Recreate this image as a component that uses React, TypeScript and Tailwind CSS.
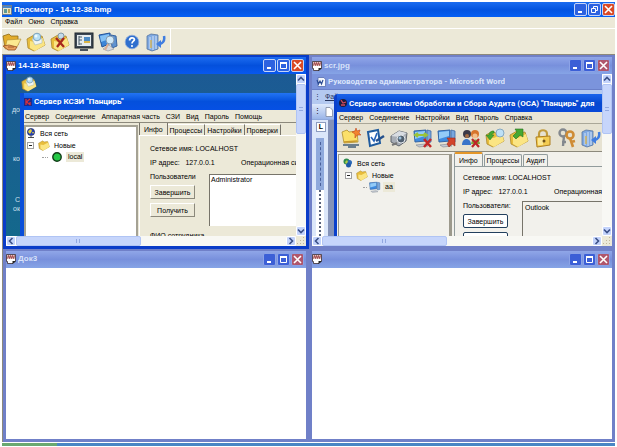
import React from 'react';
import clsx from 'clsx';

type IconProps = { className?: string };

/* Icons */

function AppIcon({ className }: IconProps) {
  return (
    <svg viewBox="0 0 10 10" className={className}>
      <rect x="0.5" y="0.5" width="9" height="9" fill="#e9e4c8" stroke="#6f7c8c" />
      <rect x="1" y="1" width="8" height="2" fill="#4c86c8" />
      <rect x="2" y="4" width="3" height="4" fill="#5e9a94" />
      <rect x="6" y="4" width="2" height="4" fill="#b8a25c" />
    </svg>
  );
}

function DocIcon({ className }: IconProps) {
  return (
    <svg viewBox="0 0 10 10" className={className}>
      <path d="M0.5 0.5h9v6.500l-2.500 2.500h-5.500v-2h-1z" fill="#fff" stroke="#3b2b30" strokeWidth="0.8" />
      <path d="M1 1h8v4h-8z" fill="#e4c4c0" />
      <path d="M1.500 4.500l1-3 1 3 1-3 1 3 1-3 1 3 1-3" stroke="#8c2228" strokeWidth="0.7" fill="none" />
      <path d="M6.500 10v-3h3.500z" fill="#222" />
    </svg>
  );
}

function Folder({ className, children }: IconProps & { children?: React.ReactNode }) {
  return (
    <svg viewBox="0 0 20 20" className={className}>
      <path d="M1 7l7-4 2 2 6-1 3 9-11 6-6-3z" fill="#e8bd3c" stroke="#a8862c" strokeWidth="0.8" />
      <path d="M4 9l5 1 8-4 2 7-10 6-5-3z" fill="#fbe583" />
      {children}
    </svg>
  );
}

function FolderSearch({ className }: IconProps) {
  return (
    <Folder className={className}>
      <path d="M6 7l5-3 5 3v4l-7 2z" fill="#f1f5f2" stroke="#a9b8b4" strokeWidth="0.6" />
      <circle cx="11" cy="5" r="3.8" fill="#b9e0f5" stroke="#7ba2bd" />
      <circle cx="10" cy="4" r="1.5" fill="#eefaff" />
    </Folder>
  );
}

function FolderDelete({ className }: IconProps) {
  return (
    <Folder className={className}>
      <circle cx="11" cy="4" r="3" fill="#c5dceb" stroke="#8299a8" />
      <path d="M6 6l8 9M14 6l-7 9" stroke="#a8281c" strokeWidth="2.3" fill="none" />
    </Folder>
  );
}

function FolderOpenHand({ className }: IconProps) {
  return (
    <svg viewBox="0 0 20 20" className={className}>
      <path d="M1 4l6-2 2 2h7v9l-13 3z" fill="#e3ad2c" stroke="#8d6a18" strokeWidth="0.8" />
      <path d="M5 8l14-1-4 8-12 2z" fill="#fcea90" stroke="#b08b2e" strokeWidth="0.6" />
      <path d="M1 14l6-1 8 2-2 3h-7z" fill="#e9a15e" stroke="#944f22" strokeWidth="0.8" />
      <path d="M6 15h6" stroke="#944f22" strokeWidth="0.8" />
    </svg>
  );
}

function ScreenIcon({ className }: IconProps) {
  return (
    <svg viewBox="0 0 20 20" className={className}>
      <rect x="1" y="1" width="18" height="15" fill="#3d4854" stroke="#1f262e" />
      <rect x="3" y="3" width="14" height="11" fill="#e6ecef" />
      <path d="M5 4v9M5 5h3M5 8h3M5 12h3" stroke="#4b5d6b" />
      <rect x="10" y="5" width="6" height="6" fill="#4d8ac4" />
      <rect x="10" y="9" width="6" height="2" fill="#d9b54a" />
      <path d="M6 18h8" stroke="#4b545c" strokeWidth="2" />
    </svg>
  );
}

function ComputerSearch({ className }: IconProps) {
  return (
    <svg viewBox="0 0 20 20" className={className}>
      <path d="M1 3l11-2 1 10-9 4z" fill="#3d86d8" stroke="#24539a" />
      <path d="M2 4l9-2v5l-8 3z" fill="#84c1f4" />
      <path d="M13 3l5 1 1 10-5 2z" fill="#5f93d0" stroke="#3a65a0" />
      <path d="M5 17l6-4 5 4-6 2z" fill="#d7dadf" stroke="#8a919c" strokeWidth="0.6" />
      <circle cx="12" cy="8" r="4" fill="#cfe9f9" stroke="#8499ae" />
      <path d="M10 12l-3 6" stroke="#dcae94" strokeWidth="2" />
    </svg>
  );
}

function HelpIcon({ className }: IconProps) {
  return (
    <svg viewBox="0 0 20 20" className={className}>
      <circle cx="10" cy="10" r="8.5" fill="#2f6fce" stroke="#8aa9dc" />
      <path d="M7 8c0-4 6-4 6-1 0 2-3 2-3 5" stroke="#fff" strokeWidth="2.2" fill="none" />
      <circle cx="10" cy="15" r="1.3" fill="#fff" />
    </svg>
  );
}

function ExitIcon({ className }: IconProps) {
  return (
    <svg viewBox="0 0 20 20" className={className}>
      <path d="M1 4l4-2 7 1v14l-6 2-5-2z" fill="#7fa9e2" stroke="#55759f" strokeWidth="0.8" />
      <path d="M4 5v12M7 4v14M10 4v13" stroke="#d5e3f5" />
      <path d="M5 8v8" stroke="#d0b25a" strokeWidth="1.5" />
      <path d="M18 4c1 5-1 7-4 8" stroke="#3f7de0" strokeWidth="2.5" fill="none" />
      <path d="M10 12l5-4v8z" fill="#3f7de0" />
    </svg>
  );
}

function FolderNew({ className }: IconProps) {
  return (
    <svg viewBox="0 0 20 20" className={className}>
      <path d="M1 4l5-2 2 2 8-1 1 11-14 1z" fill="#fbe069" stroke="#b08f2c" strokeWidth="0.8" />
      <path d="M3 14l13-1" stroke="#c99a2c" strokeWidth="1.5" />
      <path d="M2 17h16M7 19h8" stroke="#6b7f8e" strokeWidth="1.8" />
      <path d="M15 0l1 3 3-1-1 3 2 2h-4l-2 3v-4l-3-2 3-1z" fill="#f3842e" stroke="#c2481e" strokeWidth="0.6" />
    </svg>
  );
}

function CheckNote({ className }: IconProps) {
  return (
    <svg viewBox="0 0 20 20" className={className}>
      <path d="M3 4l10-2 2 13-10 3z" fill="#fff" stroke="#1f5b9e" strokeWidth="2" />
      <path d="M6 9l3 4 3-8" stroke="#2563b8" strokeWidth="1.6" fill="none" />
      <path d="M19 8l-8 5" stroke="#24508c" strokeWidth="2.5" />
    </svg>
  );
}

function CameraIcon({ className }: IconProps) {
  return (
    <svg viewBox="0 0 20 20" className={className}>
      <path d="M2 8l8-5 8 2-1 8-7 5-8-4z" fill="#a7adb5" stroke="#5f656d" />
      <path d="M2 8l8-5 8 2-7 4z" fill="#d9dde2" />
      <circle cx="12" cy="11" r="4" fill="#51606f" stroke="#e1e5e9" />
      <circle cx="11" cy="10" r="1.5" fill="#9ec1dd" />
      <path d="M3 17l5-2" stroke="#777" strokeWidth="2" />
    </svg>
  );
}

function ComputerIcon({ className, mark }: IconProps & { mark: 'cross' | 'arrow' | 'none' }) {
  return (
    <svg viewBox="0 0 20 20" className={className}>
      <path d="M1 3l12-1v11l-11 1z" fill="#3f8be0" stroke="#3465a4" />
      <path d="M2 4l10-1v5l-10 3z" fill="#93cbf7" />
      <path d="M14 2l4 1v11l-4 1z" fill="#78a7dd" stroke="#3e6ba7" strokeWidth="0.8" />
      <path d="M3 17l9-1 3 2-9 1z" fill="#c7ccd4" stroke="#7f8790" strokeWidth="0.6" />
      {mark === 'cross' && (
        <>
          <path d="M3 7h10M5 5l-3 2 3 2M11 5l3 2-3 2" stroke="#9ac33a" strokeWidth="2" fill="none" />
          <path d="M11 11l7 8M18 11l-7 8" stroke="#c22828" strokeWidth="2.5" />
        </>
      )}
      {mark === 'arrow' && <path d="M10 10h8v8l-3-2-3 3-2-3 2-3z" fill="#d2442a" stroke="#9c2a18" strokeWidth="0.6" />}
    </svg>
  );
}

function UsersDelete({ className }: IconProps) {
  return (
    <svg viewBox="0 0 20 20" className={className}>
      <circle cx="6" cy="6" r="4" fill="#3b3946" />
      <circle cx="14" cy="6" r="4" fill="#d7752c" />
      <circle cx="14" cy="8" r="2.5" fill="#f3c08c" />
      <circle cx="6" cy="8" r="2" fill="#a56d43" />
      <path d="M1 17c0-8 9-8 9 0z" fill="#3974c9" />
      <path d="M10 16c0-6 9-6 9 0z" fill="#7da83c" />
      <path d="M11 11l7 8M18 11l-7 8" stroke="#bd2426" strokeWidth="2.2" />
    </svg>
  );
}

function FolderArrow({ className, search }: IconProps & { search?: boolean }) {
  return (
    <Folder className={className}>
      {search ? (
        <>
          <circle cx="15" cy="5" r="4" fill="#bde0f6" stroke="#86a9c2" />
          <path d="M9 3c-4 0-5 2-5 4h-3l4 5 4-5h-2c0-1 1-2 2-2z" fill="#46a832" stroke="#2a7a22" strokeWidth="0.5" />
        </>
      ) : (
        <path d="M14 1v8l-3-2-4 4-3-3 4-4-2-3z" fill="#46a832" stroke="#24701e" strokeWidth="0.6" />
      )}
    </Folder>
  );
}

function LockIcon({ className }: IconProps) {
  return (
    <svg viewBox="0 0 20 20" className={className}>
      <path d="M6 10v-4c0-5 8-5 8 0v4" stroke="#c29b3c" strokeWidth="2.2" fill="none" />
      <path d="M3 9l14-1v9l-13 2z" fill="#f3cc52" stroke="#ae7f20" />
      <path d="M5 10h5v7h-5z" fill="#fbe795" />
      <circle cx="11" cy="13" r="1.5" fill="#71531a" />
    </svg>
  );
}

function KeysIcon({ className }: IconProps) {
  return (
    <svg viewBox="0 0 20 20" className={className}>
      <circle cx="6" cy="5" r="3.5" stroke="#83888e" strokeWidth="2.4" fill="none" />
      <path d="M7 8l-1 10M5 14h4" stroke="#83888e" strokeWidth="2.4" />
      <circle cx="13" cy="7" r="3.5" stroke="#cf8c35" strokeWidth="2.6" fill="none" />
      <path d="M13 10l3 9M14 14l4-1" stroke="#cf8c35" strokeWidth="2.6" />
    </svg>
  );
}

function GlobeIcon({ className }: IconProps) {
  return (
    <svg viewBox="0 0 10 10" className={className}>
      <circle cx="5" cy="4" r="3.6" fill="#2440b8" stroke="#1a2350" strokeWidth="0.6" />
      <path d="M3 2l2-1 1 2-2 3-2-2zM6 4h2l-1 2z" fill="#e7d13a" />
      <path d="M2 9.500h6M5 8v1.500" stroke="#3a3a3a" strokeWidth="0.9" />
    </svg>
  );
}

function WorldIcon({ className }: IconProps) {
  return (
    <svg viewBox="0 0 10 10" className={className}>
      <circle cx="3.5" cy="3.5" r="3" fill="#2e8b4c" />
      <circle cx="6.5" cy="4.5" r="2.5" fill="#2b69b8" />
      <circle cx="5.5" cy="7" r="2.5" fill="#215aa8" />
      <path d="M2 4l2-2 1 2-2 2z" fill="#b2cf4a" />
    </svg>
  );
}

/* Window parts */

function CaptionButton({ kind, active }: { kind: 'min' | 'max' | 'restore' | 'close'; active: boolean }) {
  const labels = { min: 'Свернуть', max: 'Развернуть', restore: 'Восстановить', close: 'Закрыть' };
  return (
    <button
      aria-label={labels[kind]}
      className={clsx(
        'flex size-[13px] items-center justify-center rounded-xs border',
        active ? 'border-[#c5d5f8]' : 'border-[#8ca3e6]',
        kind === 'close' ? (active ? 'bg-[#da4a26]' : 'bg-[#b0566c]') : active ? 'bg-[#2d62e0]' : 'bg-[#3c5fd6]',
      )}
    >
      <svg viewBox="0 0 9 9" className="size-[9px]" fill="none" stroke="#fff">
        {kind === 'min' && <path d="M2 7h4" strokeWidth="2" />}
        {kind === 'max' && (
          <>
            <path d="M1 2h7" strokeWidth="2" />
            <path d="M1.500 2v5.500h6v-5.500" />
          </>
        )}
        {kind === 'restore' && <path d="M3.500 3v-1.500h4v4h-1.500M1.500 3.500h4v4h-4z" />}
        {kind === 'close' && <path d="M1 1l7 7M8 1l-7 7" strokeWidth="1.6" />}
      </svg>
    </button>
  );
}

function Arrow({ d, label }: { d: string; label: string }) {
  return (
    <button aria-label={label} className="flex size-2.5 shrink-0 items-center justify-center rounded-xs border border-white bg-[#c3d3fb]">
      <svg viewBox="0 0 8 8" className="size-2" fill="none" stroke="#3a4f86" strokeWidth="1.6">
        <path d={d} />
      </svg>
    </button>
  );
}

function ChildWindow({ title, active = false, children }: { title: string; active?: boolean; children?: React.ReactNode }) {
  return (
    <section
      className={clsx(
        'flex min-h-0 min-w-0 flex-col overflow-hidden border-3 border-t-2',
        active ? 'border-[#0a3cc8] bg-[#0a50e0]' : 'border-[#7080c8] bg-[#7b96e0]',
      )}
    >
      <header
        className={clsx(
          'flex h-[17px] shrink-0 items-center gap-0.5 pr-0.5',
          active ? 'bg-linear-to-b from-[#1c6cf0] via-[#0450dc] to-[#0858ee]' : 'bg-linear-to-b from-[#90a6e8] via-[#7890dc] to-[#86a4e6]',
        )}
      >
        <DocIcon className="size-2.5 shrink-0" />
        <h2 className={clsx('flex-1 truncate text-[8px] font-bold', active ? 'text-white' : 'text-[#d8e2fa]')}>{title}</h2>
        <div className="flex gap-px">
          <CaptionButton kind="min" active={active} />
          <CaptionButton kind="max" active={active} />
          <CaptionButton kind="close" active={active} />
        </div>
      </header>
      {children ? <ScrollFrame>{children}</ScrollFrame> : <div className="flex-1 bg-white" />}
    </section>
  );
}

function ScrollFrame({ children }: { children: React.ReactNode }) {
  return (
    <div className="grid min-h-0 flex-1 grid-cols-[minmax(0,1fr)_10px] grid-rows-[minmax(0,1fr)_10px] bg-[#f8f8f4]">
      <div className="relative overflow-hidden">{children}</div>
      <div className="flex flex-col">
        <Arrow d="M1 5.500l3-3 3 3" label="Вверх" />
        <div className="flex h-[31%] items-center justify-center rounded-xs border border-[#b0c4f4] bg-[#c6d5fb]">
          <div className="h-1 w-1 border-y border-[#92a8e0]" />
        </div>
        <div className="flex-1" />
        <Arrow d="M1 2.500l3 3 3-3" label="Вниз" />
      </div>
      <div className="flex">
        <Arrow d="M5.500 1l-3 3 3 3" label="Влево" />
        <div className="flex w-[43%] items-center justify-center rounded-xs border border-[#b0c4f4] bg-[#c6d5fb]">
          <div className="h-1 w-1 border-x border-[#92a8e0]" />
        </div>
        <div className="flex-1" />
        <Arrow d="M2.500 1l3 3-3 3" label="Вправо" />
      </div>
      <div className="bg-[#ece9d8]">
        <svg viewBox="0 0 10 10" className="size-2.5" fill="#c3b79c">
          <path d="M7 1h1v1h-1zM4 4h1v1h-1zM7 4h1v1h-1zM1 7h1v1h-1zM4 7h1v1h-1zM7 7h1v1h-1z" />
        </svg>
      </div>
    </div>
  );
}

function MenuBar({ items, className }: { items: string[]; className?: string }) {
  return (
    <nav className={clsx('flex shrink-0 items-center text-[7px] whitespace-nowrap', className)}>
      {items.map((item) => (
        <button key={item}>{item}</button>
      ))}
    </nav>
  );
}

function Expander() {
  return (
    <svg viewBox="0 0 7 7" className="size-[7px] shrink-0">
      <rect x="0.5" y="0.5" width="6" height="6" fill="#fff" stroke="#a0a0a0" />
      <path d="M2 3.500h3" stroke="#222" />
    </svg>
  );
}

function HostInfo({ os }: { os: string }) {
  return (
    <>
      <p className="whitespace-nowrap">Сетевое имя: LOCALHOST</p>
      <div className="flex whitespace-nowrap">
        <span className="w-[91px] shrink-0">IP адрес: &nbsp; 127.0.0.1</span>
        <span>{os}</span>
      </div>
    </>
  );
}

function ServerWindow() {
  const tabs = ['Инфо', 'Процессы', 'Настройки', 'Проверки'];
  return (
    <div className="h-full bg-linear-to-b from-[#1c5a94] to-[#14688c] text-[7px] leading-[9px]">
      <div className="flex h-full w-3.5 flex-col text-right text-[#cfe0ee]">
        <p className="mt-[31px]">дo</p>
        <p className="mt-10">кo</p>
        <p className="mt-8">С</p>
        <p>oк</p>
      </div>
      <FolderSearch className="absolute top-0.5 left-3.5 h-4 w-[18px]" />
      <div className="absolute inset-0 top-[19px] left-3.5 flex flex-col border-l-4 border-[#0a4ed8] bg-[#ece9d8] text-black">
        <header className="flex h-[17px] shrink-0 items-center gap-0.5 bg-linear-to-b from-[#2274f4] via-[#0450dc] to-[#0650e4]">
          <svg viewBox="0 0 8 8" className="size-2">
            <path d="M0 0h8v8h-8z" fill="#1c2a8c" />
            <path d="M2 1v6M6 1l-3.500 3 4 3M6 4v3" stroke="#d8303c" strokeWidth="1.3" fill="none" />
          </svg>
          <h3 className="truncate font-[Roboto,sans-serif] text-[8px] font-bold text-white">Сервер КСЗИ "Панцирь"</h3>
        </header>
        <MenuBar className="h-3 gap-1.5 pl-px" items={['Сервер', 'Соединение', 'Аппаратная часть', 'СЗИ', 'Вид', 'Пароль', 'Помощь']} />
        <div className="flex min-h-0 flex-1 border-t border-[#8c897c]">
          <div className="mt-0.5 w-[114px] shrink-0 border-2 border-b-0 border-[#a5a294] bg-white">
            <div className="flex h-3 items-center gap-1">
              <GlobeIcon className="size-2.5" />
              Вся сеть
            </div>
            <div className="flex h-3 items-center gap-1 pl-px">
              <Expander />
              <Folder className="size-3" />
              Новые
            </div>
            <div className="flex h-3 items-center gap-1 pl-4">
              <span className="w-1.5 border-t border-dotted border-[#a0a0a0]" />
              <svg viewBox="0 0 10 10" className="size-2.5">
                <circle cx="5" cy="5" r="4.2" fill="#25c846" stroke="#123c18" strokeWidth="1.4" />
              </svg>
              <span className="bg-[#ece9d8] px-0.5 leading-2.5">local</span>
            </div>
          </div>
          <div className="flex min-w-0 flex-1 flex-col pl-px">
            <div role="tablist" className="flex h-3 shrink-0 items-end">
              {tabs.map((tab, i) => (
                <button
                  key={tab}
                  role="tab"
                  aria-selected={i === 0}
                  className={clsx('border-r border-[#77746a]', i === 0 ? 'h-3 border-l px-1' : 'h-[11px] border-t border-t-white px-0.5')}
                >
                  {tab}
                </button>
              ))}
            </div>
            <div className="flex flex-1 flex-col gap-[5px] overflow-hidden border-t border-l border-white pt-2 pl-2.5">
              <HostInfo os="Операционная си" />
              <div className="flex gap-3.5">
                <div className="flex w-[45px] shrink-0 flex-col gap-1">
                  <p>Пользователи</p>
                  <button className="h-3.5 border border-t-white border-r-[#8c897c] border-b-[#8c897c] border-l-white">Завершить</button>
                  <button className="h-3.5 border border-t-white border-r-[#8c897c] border-b-[#8c897c] border-l-white">Получить</button>
                </div>
                <ul role="listbox" aria-label="Пользователи" className="mt-0.5 h-[52px] flex-1 border-t border-l border-[#77746a] bg-white pl-px">
                  <li role="option" aria-selected={false}>Administrator</li>
                </ul>
              </div>
              <p className="whitespace-nowrap">ФИО сотрудника</p>
            </div>
          </div>
        </div>
      </div>
    </div>
  );
}

function WordBackdrop() {
  return (
    <div className="flex h-full flex-col bg-[#b4c9f0] text-[7px]">
      <header className="flex h-4 shrink-0 items-center gap-0.5 border-b border-[#6a80c8] bg-[#7b94dc] pl-1 text-[#d9e3fa]">
        <svg viewBox="0 0 10 10" className="size-2.5">
          <path d="M2 0.500h6l1.500 2v7h-7.500z" fill="#f4f7fc" stroke="#5870b0" strokeWidth="0.8" />
          <path d="M1 3l1.500 4 1.500-3 1.500 3 1.500-4" stroke="#2c4c94" strokeWidth="1.2" fill="none" />
        </svg>
        <h3 className="truncate font-[Roboto,sans-serif] text-[8px] font-bold">Руководство администратора - Microsoft Word</h3>
      </header>
      <p className="flex h-3.5 shrink-0 items-center gap-1 pl-0.5 text-[#26345c]">
        <span>⋮</span>
        <span className="underline">Фай</span>
      </p>
      <div className="flex h-4 shrink-0 items-center gap-1 border-b border-[#8ea8dc] bg-linear-to-b from-[#dfe9fb] to-[#9ab5e8] pl-0.5">
        <span>⋮</span>
        <svg viewBox="0 0 8 10" className="h-2.5 w-2">
          <path d="M1 0.500h4l2.500 2.500v6.500h-6.500z" fill="#fff" stroke="#7d88a0" strokeWidth="0.8" />
        </svg>
      </div>
      <div className="flex min-h-0 flex-1">
        <div className="flex w-4 flex-col bg-[#dce7fa] pl-1">
          <span className="mt-0.5 flex size-2.5 items-center justify-center border border-[#8c9cc0] bg-white font-bold">L</span>
          <div className="mt-1.5 flex w-2 flex-1 flex-col items-center bg-white">
            <div className="flex h-[52px] w-full justify-center bg-[#8fa9dc]">
              <div className="my-1 border-l border-dashed border-[#4a609c]" />
            </div>
            <div className="flex-1 border-l-2 border-dotted border-[#58627c]" />
          </div>
        </div>
        <div className="flex-1 bg-[#8492b8]" />
      </div>
    </div>
  );
}

function AuditWindow() {
  const tabs = ['Инфо', 'Процессы', 'Аудит'];
  const tools = [
    { label: 'Создать', icon: <FolderNew className="size-5" /> },
    { label: 'Проверить', icon: <CheckNote className="size-5" /> },
    { label: 'Снимок', icon: <CameraIcon className="size-5" /> },
    { label: 'Разъединить', icon: <ComputerIcon mark="cross" className="size-5" /> },
    { label: 'Подключить', icon: <ComputerIcon mark="arrow" className="size-5" /> },
    { label: 'Удалить пользователя', icon: <UsersDelete className="size-5" /> },
    { label: 'Найти', icon: <FolderArrow search className="size-5" /> },
    { label: 'Загрузить', icon: <FolderArrow className="size-5" /> },
    { label: 'Заблокировать', icon: <LockIcon className="size-5" /> },
    { label: 'Ключи', icon: <KeysIcon className="size-5" /> },
    { label: 'Выход', icon: <ExitIcon className="size-5" /> },
  ];
  return (
    <>
      <WordBackdrop />
      <div className="absolute inset-0 top-5 left-[22px] flex flex-col rounded-tl-sm border-l-3 border-[#0a40cc] bg-[#f2f1ec] text-[7px] leading-[9px]">
        <header className="flex h-[18px] shrink-0 items-center gap-px bg-linear-to-b from-[#1a64ec] via-[#0648d0] to-[#0848d8] pl-px">
          <svg viewBox="0 0 10 10" className="size-2.5 shrink-0">
            <circle cx="5" cy="5" r="4" fill="#1c1c3c" />
            <path d="M3 2l2 3 3-1M3 7h4" stroke="#d04a5c" strokeWidth="1.3" fill="none" />
          </svg>
          <h3 className="font-[Roboto,sans-serif] text-[8px] font-bold whitespace-nowrap text-white">
            Сервер системы Обработки и Сбора Аудита (ОСА) "Панцирь" для
          </h3>
        </header>
        <MenuBar className="h-3 gap-1.5 border-b border-[#aaa798] bg-[#e9e5d6] pl-0.5" items={['Сервер', 'Соединение', 'Настройки', 'Вид', 'Пароль', 'Справка']} />
        <div className="flex h-7 shrink-0 items-center gap-1 border-b border-[#8c897c] bg-[#e6e2d2] pl-1">
          {tools.map((tool) => (
            <button key={tool.label} aria-label={tool.label} className="shrink-0">
              {tool.icon}
            </button>
          ))}
        </div>
        <div className="flex min-h-0 flex-1">
          <div className="mt-0.5 ml-px w-[114px] shrink-0 border-t border-r-3 border-l border-[#9c998c] pt-0.5 pl-1">
            <div className="flex h-3 items-center gap-1">
              <WorldIcon className="size-2.5" />
              Вся сеть
            </div>
            <div className="flex h-3 items-center gap-1 pl-0.5">
              <Expander />
              <Folder className="size-3" />
              Новые
            </div>
            <div className="flex h-3 items-center gap-0.5 pl-5">
              <span className="w-1 border-t border-dotted border-[#a0a0a0]" />
              <ComputerIcon mark="none" className="size-3" />
              <span className="bg-[#ece9d8] px-0.5 leading-2.5">aa</span>
            </div>
          </div>
          <div className="flex min-w-0 flex-1 flex-col pl-0.5">
            <div role="tablist" className="flex h-3.5 shrink-0 items-end gap-px">
              {tabs.map((tab, i) => (
                <button
                  key={tab}
                  role="tab"
                  aria-selected={i === 0}
                  className={clsx('rounded-t-xs border border-b-0 border-[#919b9c]', i === 0 ? 'h-3.5 border-t-2 border-t-[#e59728] px-1' : 'h-3 px-0.5')}
                >
                  {tab}
                </button>
              ))}
            </div>
            <div className="flex flex-1 flex-col gap-[5px] overflow-hidden border-t border-l border-[#919b9c] pt-1.5 pl-2">
              <HostInfo os="Операционная" />
              <div className="flex gap-3.5">
                <div className="flex w-[45px] shrink-0 flex-col gap-1">
                  <p>Пользователи:</p>
                  <button className="h-3.5 shrink-0 rounded-xs border border-[#23405e] bg-white">Завершить</button>
                  <div className="h-3.5 shrink-0 rounded-xs border border-[#23405e] bg-white" />
                </div>
                <ul role="listbox" aria-label="Пользователи" className="flex-1 border-t border-l border-[#77746a] pt-px pl-0.5">
                  <li role="option" aria-selected={false}>Outlook</li>
                </ul>
              </div>
            </div>
          </div>
        </div>
      </div>
    </>
  );
}

export default function App() {
  const tools = [
    { label: 'Открыть', icon: <FolderOpenHand className="size-5" /> },
    { label: 'Найти', icon: <FolderSearch className="size-5" /> },
    { label: 'Удалить', icon: <FolderDelete className="size-5" /> },
    { label: 'Экран', icon: <ScreenIcon className="size-5" /> },
    { label: 'Поиск компьютера', icon: <ComputerSearch className="size-5" /> },
    { label: 'Справка', icon: <HelpIcon className="size-4" /> },
    { label: 'Выход', icon: <ExitIcon className="size-5" /> },
  ];
  return (
    <div className="flex h-screen flex-col bg-white p-0.5 pb-px font-['Liberation_Sans',sans-serif] text-black">
      <header className="flex h-[15px] shrink-0 items-center gap-0.5 bg-linear-to-b from-[#1a6cf0] via-[#0454e0] to-[#0660f4]">
        <AppIcon className="size-2.5" />
        <h1 className="flex-1 text-[8px] font-bold text-white">Просмотр - 14-12-38.bmp</h1>
        <div className="flex gap-px">
          <CaptionButton kind="min" active />
          <CaptionButton kind="restore" active />
          <CaptionButton kind="close" active />
        </div>
      </header>
      <MenuBar className="h-3 gap-1.5 border-b border-white bg-[#ece9d8] pl-[3px]" items={['Файл', 'Окно', 'Справка']} />
      <div className="flex h-[25px] shrink-0 bg-[#ece9d8]">
        <div className="flex items-center gap-1 border-r border-white pr-1">
          {tools.map((tool) => (
            <button key={tool.label} aria-label={tool.label} className="flex w-5 justify-center">
              {tool.icon}
            </button>
          ))}
        </div>
      </div>
      <main className="grid min-h-0 flex-1 grid-cols-2 grid-rows-2 border-t border-l border-[#8c897c]">
        <ChildWindow title="14-12-38.bmp" active>
          <ServerWindow />
        </ChildWindow>
        <ChildWindow title="scr.jpg">
          <AuditWindow />
        </ChildWindow>
        <ChildWindow title="Док3" />
        <ChildWindow title="" />
      </main>
      <footer className="mt-px flex h-[3px] shrink-0 bg-[#4a86c4]">
        <div className="w-[9%] bg-[#6aa870]" />
      </footer>
    </div>
  );
}
